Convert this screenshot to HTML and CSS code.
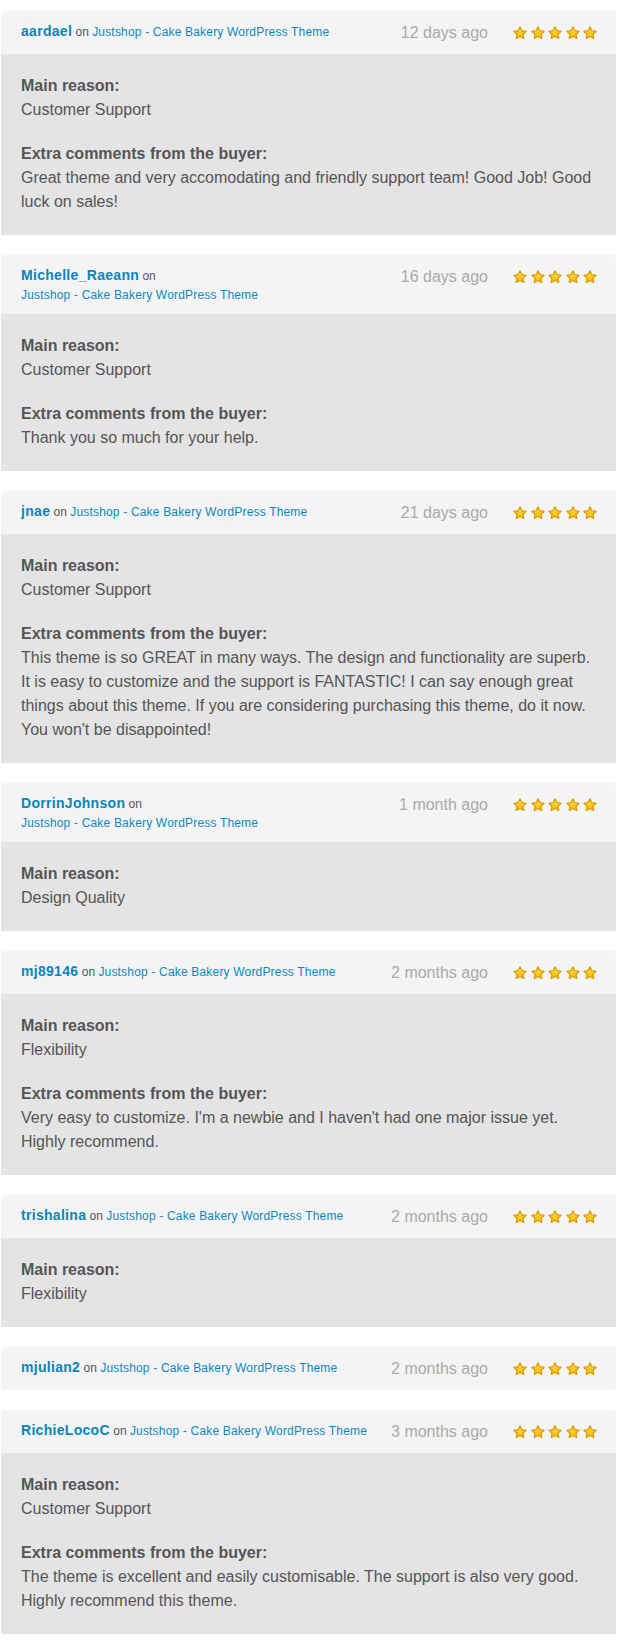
FILE: index.html
```html
<!DOCTYPE html>
<html lang="en">
<head>
<meta charset="utf-8">
<title>Reviews</title>
<link rel="stylesheet" href="styles.css">
</head>
<body>
<svg class="defs" width="0" height="0" aria-hidden="true">
  <defs>
    <linearGradient id="starfill" x1="0" y1="0" x2="0" y2="1">
      <stop offset="0" stop-color="#ffe15a"/>
      <stop offset="1" stop-color="#f6b400"/>
    </linearGradient>
    <symbol id="star" viewBox="0 0 24 24">
      <path d="M12 1.5l3.2 6.5 7.3 1-5.3 5.1 1.3 7.3L12 18l-6.5 3.4 1.3-7.3L1.5 9l7.3-1z" fill="url(#starfill)" stroke="#d99a00" stroke-width="2" stroke-linejoin="round"/>
    </symbol>
  </defs>
</svg>

<div class="reviews">

  <div class="review">
    <div class="head">
      <div class="meta"><a class="user">aardael</a> on <a class="item">Justshop - Cake Bakery WordPress Theme</a></div>
      <div class="time">12 days ago</div>
      <div class="stars"><svg class="star"><use href="#star"/></svg><svg class="star"><use href="#star"/></svg><svg class="star"><use href="#star"/></svg><svg class="star"><use href="#star"/></svg><svg class="star"><use href="#star"/></svg></div>
    </div>
    <div class="body">
      <p><b>Main reason:</b><br>Customer Support</p>
      <p><b>Extra comments from the buyer:</b><br>Great theme and very accomodating and friendly support team! Good Job! Good luck on sales!</p>
    </div>
  </div>

  <div class="review">
    <div class="head">
      <div class="meta"><a class="user">Michelle_Raeann</a> on <a class="item">Justshop - Cake Bakery WordPress Theme</a></div>
      <div class="time">16 days ago</div>
      <div class="stars"><svg class="star"><use href="#star"/></svg><svg class="star"><use href="#star"/></svg><svg class="star"><use href="#star"/></svg><svg class="star"><use href="#star"/></svg><svg class="star"><use href="#star"/></svg></div>
    </div>
    <div class="body">
      <p><b>Main reason:</b><br>Customer Support</p>
      <p><b>Extra comments from the buyer:</b><br>Thank you so much for your help.</p>
    </div>
  </div>

  <div class="review">
    <div class="head">
      <div class="meta"><a class="user">jnae</a> on <a class="item">Justshop - Cake Bakery WordPress Theme</a></div>
      <div class="time">21 days ago</div>
      <div class="stars"><svg class="star"><use href="#star"/></svg><svg class="star"><use href="#star"/></svg><svg class="star"><use href="#star"/></svg><svg class="star"><use href="#star"/></svg><svg class="star"><use href="#star"/></svg></div>
    </div>
    <div class="body">
      <p><b>Main reason:</b><br>Customer Support</p>
      <p><b>Extra comments from the buyer:</b><br>This theme is so GREAT in many ways. The design and functionality are superb. It is easy to customize and the support is FANTASTIC! I can say enough great things about this theme. If you are considering purchasing this theme, do it now. You won't be disappointed!</p>
    </div>
  </div>

  <div class="review">
    <div class="head">
      <div class="meta"><a class="user">DorrinJohnson</a> on <a class="item">Justshop - Cake Bakery WordPress Theme</a></div>
      <div class="time">1 month ago</div>
      <div class="stars"><svg class="star"><use href="#star"/></svg><svg class="star"><use href="#star"/></svg><svg class="star"><use href="#star"/></svg><svg class="star"><use href="#star"/></svg><svg class="star"><use href="#star"/></svg></div>
    </div>
    <div class="body">
      <p><b>Main reason:</b><br>Design Quality</p>
    </div>
  </div>

  <div class="review">
    <div class="head">
      <div class="meta"><a class="user">mj89146</a> on <a class="item">Justshop - Cake Bakery WordPress Theme</a></div>
      <div class="time">2 months ago</div>
      <div class="stars"><svg class="star"><use href="#star"/></svg><svg class="star"><use href="#star"/></svg><svg class="star"><use href="#star"/></svg><svg class="star"><use href="#star"/></svg><svg class="star"><use href="#star"/></svg></div>
    </div>
    <div class="body">
      <p><b>Main reason:</b><br>Flexibility</p>
      <p><b>Extra comments from the buyer:</b><br>Very easy to customize. I'm a newbie and I haven't had one major issue yet. Highly recommend.</p>
    </div>
  </div>

  <div class="review">
    <div class="head">
      <div class="meta"><a class="user">trishalina</a> on <a class="item">Justshop - Cake Bakery WordPress Theme</a></div>
      <div class="time">2 months ago</div>
      <div class="stars"><svg class="star"><use href="#star"/></svg><svg class="star"><use href="#star"/></svg><svg class="star"><use href="#star"/></svg><svg class="star"><use href="#star"/></svg><svg class="star"><use href="#star"/></svg></div>
    </div>
    <div class="body">
      <p><b>Main reason:</b><br>Flexibility</p>
    </div>
  </div>

  <div class="review">
    <div class="head head-only">
      <div class="meta"><a class="user">mjulian2</a> on <a class="item">Justshop - Cake Bakery WordPress Theme</a></div>
      <div class="time">2 months ago</div>
      <div class="stars"><svg class="star"><use href="#star"/></svg><svg class="star"><use href="#star"/></svg><svg class="star"><use href="#star"/></svg><svg class="star"><use href="#star"/></svg><svg class="star"><use href="#star"/></svg></div>
    </div>
  </div>

  <div class="review">
    <div class="head">
      <div class="meta"><a class="user">RichieLocoC</a> on <a class="item">Justshop - Cake Bakery WordPress Theme</a></div>
      <div class="time">3 months ago</div>
      <div class="stars"><svg class="star"><use href="#star"/></svg><svg class="star"><use href="#star"/></svg><svg class="star"><use href="#star"/></svg><svg class="star"><use href="#star"/></svg><svg class="star"><use href="#star"/></svg></div>
    </div>
    <div class="body">
      <p><b>Main reason:</b><br>Customer Support</p>
      <p><b>Extra comments from the buyer:</b><br>The theme is excellent and easily customisable. The support is also very good. Highly recommend this theme.</p>
    </div>
  </div>

</div>
</body>
</html>
```

FILE: styles.css
```css
html, body {
  margin: 0;
  padding: 0;
  background: #ffffff;
}

body {
  font-family: "Liberation Sans", Arial, sans-serif;
  color: #555555;
}

.defs {
  display: block;
  width: 0;
  height: 0;
  overflow: hidden;
}

.reviews {
  display: flex;
  flex-direction: column;
  gap: 20px;
  padding: 11px 3px 0 1px;
}

.review {
  display: flex;
  flex-direction: column;
}

.head {
  display: flex;
  align-items: flex-start;
  background: #f4f4f4;
  border-radius: 4px 4px 0 0;
  padding: 10px 19px 10px 20px;
}

.head-only {
  border-radius: 4px;
}

.meta {
  flex: 1;
  min-width: 0;
  font-size: 12px;
  line-height: 19px;
  color: #555555;
  padding-top: 1px;
  margin-bottom: -1px;
}

.user {
  font-size: 14px;
  font-weight: bold;
  color: #0b85ba;
  letter-spacing: 0.3px;
}

.item {
  color: #0f88c0;
  white-space: nowrap;
  letter-spacing: 0.18px;
}

.time {
  width: 114px;
  flex-shrink: 0;
  text-align: right;
  font-size: 16px;
  line-height: 23px;
  color: #aaaaaa;
}

.stars {
  flex-shrink: 0;
  display: flex;
  gap: 3.5px;
  margin-left: 25px;
  height: 23px;
  align-items: center;
}

.star {
  width: 14px;
  height: 14px;
  display: block;
}

.body {
  background: #e4e4e4;
  padding: 20px 20px 21px 20px;
  font-size: 16px;
  line-height: 24px;
  color: #555555;
}

.body p {
  margin: 0 0 20px 0;
}

.body p:last-child {
  margin-bottom: 0;
}

.body b {
  font-weight: bold;
}
```
